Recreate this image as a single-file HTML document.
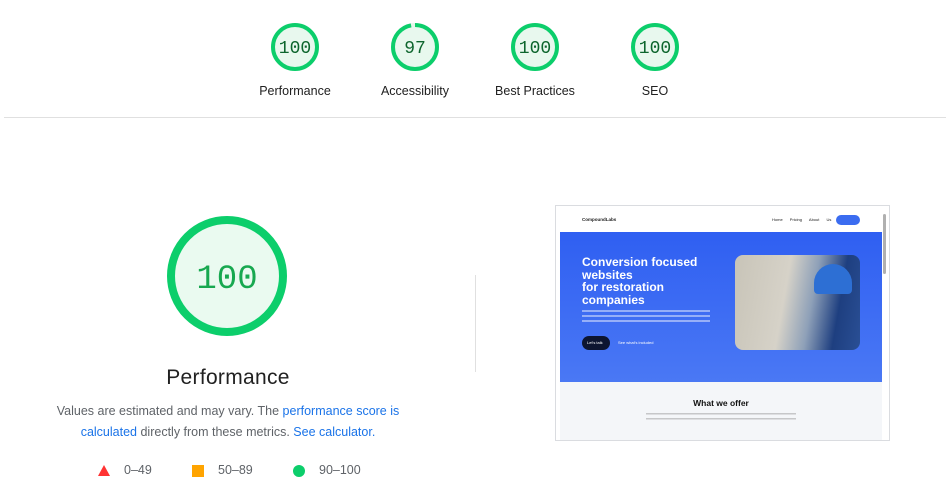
<!DOCTYPE html>
<html><head><meta charset="utf-8"><style>
body{margin:0;width:952px;height:496px;background:#fff;font-family:"Liberation Sans",sans-serif;position:relative;overflow:hidden;color:#212121}
.abs{position:absolute}
a{color:#1a73e8;text-decoration:none}
</style></head><body>
<svg class="abs" style="left:0;top:0" width="952" height="140">
 <g fill="#e8f8ee" stroke="#0cce6b" stroke-width="4">
  <circle cx="295" cy="47" r="22"/>
  <circle cx="535" cy="47" r="22"/>
  <circle cx="655" cy="47" r="22"/>
  <circle cx="415" cy="47" r="22" stroke="#e4f5ea"/>
 </g>
 <circle cx="415" cy="47" r="22" fill="none" stroke="#0cce6b" stroke-width="4" stroke-dasharray="134.1 138.2" transform="rotate(-90 415 47)"/>
 <g font-family="Liberation Mono, monospace" font-size="18" fill="#0d652d" text-anchor="middle">
  <text x="295" y="53">100</text><text x="415" y="53">97</text><text x="535" y="53">100</text><text x="655" y="53">100</text>
 </g>
 <g font-family="Liberation Sans, sans-serif" font-size="12.5" fill="#212121" text-anchor="middle">
  <text x="295" y="95">Performance</text><text x="415" y="95">Accessibility</text><text x="535" y="95">Best Practices</text><text x="655" y="95">SEO</text>
 </g>
 <line x1="4" y1="117.5" x2="946" y2="117.5" stroke="#e0e0e0"/>
</svg>
<svg class="abs" style="top:210px;left:160px" width="140" height="140">
 <circle cx="67" cy="66" r="56" fill="#eafaf0" stroke="#0cce6b" stroke-width="8"/>
 <text x="67" y="78" text-anchor="middle" font-family="Liberation Mono, monospace" font-size="34" fill="#18a850">100</text>
</svg>
<div class="abs" style="left:128px;top:366px;width:200px;text-align:center;font-size:21px;color:#212121;letter-spacing:.3px">Performance</div>
<div class="abs" style="left:40px;top:401px;width:376px;text-align:center;font-size:12.5px;line-height:21px;color:#5f6368">Values are estimated and may vary. The <a>performance score is calculated</a> directly from these metrics. <a>See calculator.</a></div>
<svg class="abs" style="left:96px;top:463px" width="280" height="18">
 <polygon points="8,2 14,13 2,13" fill="#f33"/>
 <rect x="96" y="2" width="12" height="12" fill="#ffa400"/>
 <circle cx="203" cy="8" r="6" fill="#0cce6b"/>
</svg>
<div class="abs" style="left:124px;top:463px;font-size:12.5px;color:#5f6368">0–49</div>
<div class="abs" style="left:218px;top:463px;font-size:12.5px;color:#5f6368">50–89</div>
<div class="abs" style="left:319px;top:463px;font-size:12.5px;color:#5f6368">90–100</div>
<div class="abs" style="left:475px;top:275px;width:1px;height:97px;background:#e0e0e0"></div>
<div class="abs" style="left:555px;top:205px;width:333px;height:234px;border:1px solid #dadce0;background:#fff;overflow:hidden">
 <div class="abs" style="left:26px;top:11px;font-size:4.5px;font-weight:bold">CompoundLabs</div>
 <div class="abs" style="left:216px;top:11px;font-size:4px;word-spacing:6px">Home Pricing About&nbsp;Us</div>
 <div class="abs" style="left:280px;top:9px;width:24px;height:10px;border-radius:5px;background:#3b6cf0"></div>
 <div class="abs" style="left:4px;top:26px;width:322px;height:150px;background:linear-gradient(180deg,#2f5ff2,#4a78f4)"></div>
 <div class="abs" style="left:26px;top:50px;font-size:12px;line-height:12.5px;font-weight:bold;color:#fff">Conversion focused<br>websites<br>for restoration<br>companies</div>
 <div class="abs" style="left:26px;top:104px;width:128px;height:14px;background:repeating-linear-gradient(180deg,rgba(255,255,255,.45) 0 2px,transparent 2px 5px)"></div>
 <div class="abs" style="left:26px;top:130px;width:28px;height:14px;border-radius:7px;background:#0d1530"></div>
 <div class="abs" style="left:31px;top:134px;font-size:4px;color:#fff">Let's talk</div>
 <div class="abs" style="left:62px;top:134px;font-size:4px;color:#fff">See what's included</div>
 <div class="abs" style="left:179px;top:49px;width:125px;height:95px;border-radius:8px;background:linear-gradient(100deg,#c8c4b8 0%,#d6d2c8 40%,#8ea0b8 60%,#1e3f80 80%,#2a4f95 100%)"></div>
 <div class="abs" style="left:258px;top:58px;width:38px;height:30px;border-radius:19px 19px 4px 4px;background:#2d6fd4"></div>
 <div class="abs" style="left:4px;top:176px;width:322px;height:58px;background:#f4f6f9"></div>
 <div class="abs" style="left:0;top:192px;width:330px;text-align:center;font-size:8.5px;font-weight:bold;color:#111">What we offer</div>
 <div class="abs" style="left:90px;top:207px;width:150px;height:9px;background:repeating-linear-gradient(180deg,rgba(90,90,90,.3) 0 1.5px,transparent 1.5px 5px)"></div>
 <div class="abs" style="left:327px;top:8px;width:3px;height:60px;background:#b0b0b0;border-radius:2px"></div>
</div>
</body></html>
